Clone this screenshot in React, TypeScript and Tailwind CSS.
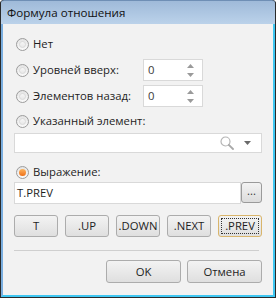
import React from "react";

const font = { fontFamily: '"Open Sans", "Noto Sans", sans-serif' };

function Radio({ checked, label }: { checked?: boolean; label: string }) {
  return (
    <div className="flex items-center h-[16px]">
      <div className="ml-[2px] w-[13px] h-[13px] rounded-full border border-[#9c9c9c] bg-gradient-to-b from-[#e4e4e4] to-[#fafafa] flex items-center justify-center">
        {checked ? (
          <div className="w-[7px] h-[7px] rounded-full bg-gradient-to-b from-[#fcb45c] to-[#ee6f12]" />
        ) : (
          <div className="w-[7px] h-[7px] rounded-full bg-gradient-to-b from-[#f6f6f6] to-[#e8e8e8] border border-[#dadada]" />
        )}
      </div>
      <span className="ml-[4px] text-[11.3px] text-[#1e1e1e] leading-[16px]">{label}</span>
    </div>
  );
}

function Spin() {
  return (
    <div className="w-[60px] h-[22px] border border-[#d9d9d9] bg-white flex items-center">
      <span className="ml-[4px] text-[11.3px] text-[#3a3a3a] flex-1 leading-none">0</span>
      <div className="flex flex-col items-center mr-[8px] gap-[5px]">
        <svg width="7" height="4" viewBox="0 0 7 4"><path d="M3.5 0 L7 4 L0 4 Z" fill="#9a9a9a" /></svg>
        <svg width="7" height="4" viewBox="0 0 7 4"><path d="M0 0 L7 0 L3.5 4 Z" fill="#9a9a9a" /></svg>
      </div>
    </div>
  );
}

function Btn({ label, focused, w }: { label: string; focused?: boolean; w?: string }) {
  return (
    <div
      className={`h-[22px] rounded-[3px] border ${focused ? "border-[#d9b56b]" : "border-[#acacac]"} bg-gradient-to-b from-[#f3f3f3] to-[#dfdfdf] flex items-center justify-center p-[2px] ${w ?? ""}`}
    >
      <div className={`w-full h-full flex items-center justify-center ${focused ? "border border-dotted border-[#333]" : ""}`}>
        <span className="text-[11.3px] text-[#1e1e1e] leading-none">{label}</span>
      </div>
    </div>
  );
}

export default function App() {
  return (
    <div className="w-[276px] h-[298px] bg-[#1b1b1b] rounded-t-[4px] overflow-hidden" style={font}>
      <div className="w-full h-full flex flex-col border-l border-r border-b border-[#2a2a2a] rounded-t-[4px]">
        <div className="h-[24px] bg-gradient-to-b from-[#9fbad9] to-[#bbd2ea] flex items-center pl-[6px] border-t border-[#6f8fb5] rounded-t-[3px]">
          <span className="text-[11.6px] text-[#111] leading-none">Формула отношения</span>
        </div>
        <div className="flex-1 flex flex-col bg-[#f2f2f2] border-l-2 border-l-[#7aaedf] border-r-2 border-r-[#3fc7f2] border-b-2 border-b-[#3fc7f2] pl-[11px] pr-[11px]">
          <div className="mt-[12px]">
            <Radio label="Нет" />
          </div>
          <div className="mt-[7px] flex items-center justify-between">
            <Radio label="Уровней вверх:" />
            <div className="mr-[59px]"><Spin /></div>
          </div>
          <div className="mt-[4px] flex items-center justify-between">
            <Radio label="Элементов назад:" />
            <div className="mr-[59px]"><Spin /></div>
          </div>
          <div className="mt-[6px]">
            <Radio label="Указанный элемент:" />
          </div>
          <div className="mt-[4px] h-[20px] border border-[#d9d9d9] bg-white flex items-center justify-end pr-[10px]">
            <svg width="14" height="14" viewBox="0 0 14 14" className="mr-[10px]">
              <circle cx="5.5" cy="5.5" r="4.5" fill="none" stroke="#b5b5b5" strokeWidth="1.2" />
              <path d="M8.8 8.8 L13 13" stroke="#a8a8a8" strokeWidth="1.8" strokeLinecap="round" />
            </svg>
            <svg width="7" height="4" viewBox="0 0 7 4"><path d="M0 0 L7 0 L3.5 4 Z" fill="#6a6a6a" /></svg>
          </div>
          <div className="mt-[11px]">
            <Radio checked label="Выражение:" />
          </div>
          <div className="mt-[2px] flex h-[22px]">
            <div className="flex-1 border border-[#d9d9d9] bg-white flex items-center pl-[2px]">
              <span className="text-[11.3px] text-[#1e1e1e] leading-none">T.PREV</span>
            </div>
            <div className="w-[21px] h-[21px] rounded-[3px] border border-[#9a9a9a] bg-gradient-to-b from-[#f3f3f3] to-[#dcdcdc] flex items-center justify-center">
              <span className="text-[11.3px] text-[#333] leading-none -mt-[4px]">...</span>
            </div>
          </div>
          <div className="mt-[11px] grid grid-cols-5 gap-[7px]">
            <Btn label="T" />
            <Btn label=".UP" />
            <Btn label=".DOWN" />
            <Btn label=".NEXT" />
            <Btn label=".PREV" focused />
          </div>
          <div className="mt-[13px] h-px bg-[#cfcfcf] mr-[3px]" />
          <div className="mt-[9px] flex justify-end gap-[6px]">
            <Btn label="OK" w="w-[75px] h-[23px]" />
            <Btn label="Отмена" w="w-[75px] h-[23px]" />
          </div>
        </div>
      </div>
    </div>
  );
}
